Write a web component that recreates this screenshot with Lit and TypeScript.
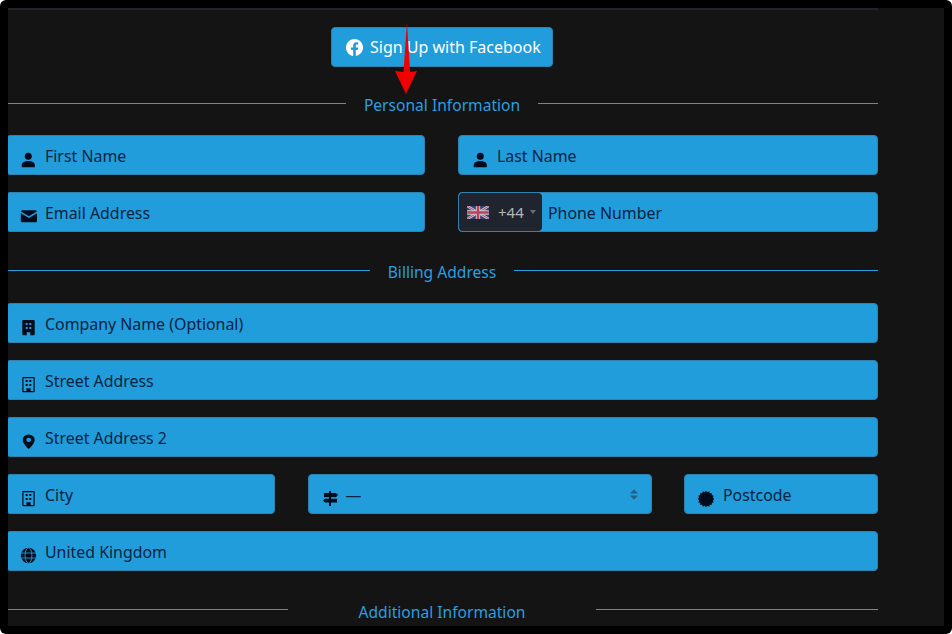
import { LitElement, html, css, svg } from "lit";
import { customElement } from "lit/decorators.js";

const burst = (() => {
  const pts: string[] = [];
  const n = 16;
  for (let i = 0; i < n * 2; i++) {
    const r = i % 2 ? 7 : 8.3;
    const a = (Math.PI * i) / n;
    pts.push(`${(7 + r * Math.cos(a)).toFixed(2)},${(8 + r * Math.sin(a)).toFixed(2)}`);
  }
  return pts.join(" ");
})();

const icons: Record<string, unknown> = {
  person: svg`<circle cx="7.3" cy="4.2" r="3.5"/><path d="M.7 14.7v-1.3c0-3 2.5-4.500 6.600-4.500s6.600 1.500 6.600 4.500v1.300a.6.6 0 0 1-.6.6H1.300a.6.6 0 0 1-.6-.6Z"/>`,
  envelope: svg`<path d="M1.500 1.200h12.800a1.500 1.500 0 0 1 1.500 1.300L7.900 7.300 0 2.500a1.500 1.500 0 0 1 1.500-1.300ZM-.2 4.200v7.500a1.500 1.500 0 0 0 1.500 1.500h13.200a1.500 1.500 0 0 0 1.500-1.500V4.200L7.900 9.100-.2 4.200Z"/>`,
  buildingFill: svg`<path fill-rule="evenodd" d="M2.300 0h10.400a1 1 0 0 1 1 1v13.200a1 1 0 0 1-1 1H9.300v-3H5.700v3H2.300a1 1 0 0 1-1-1V1a1 1 0 0 1 1-1ZM4.700 3v2h2V3h-2Zm3.600 0v2h2V3h-2ZM4.700 7v2h2V7h-2Zm3.600 0v2h2V7h-2Z"/>`,
  building: svg`<path fill-rule="evenodd" d="M2.300 0h10.400a1 1 0 0 1 1 1v13.200a1 1 0 0 1-1 1H2.300a1 1 0 0 1-1-1V1a1 1 0 0 1 1-1Zm.2 1.200v12.800h2.900v-2.800h4.200v2.800h2.900V1.200h-10ZM4.700 3h2v2h-2V3Zm3.600 0h2v2h-2V3ZM4.700 7h2v2h-2V7Zm3.600 0h2v2h-2V7Z"/>`,
  geo: svg`<path transform="translate(-.3 .5) scale(1 .9)" d="M8 16s6-5.686 6-10A6 6 0 0 0 2 6c0 4.314 6 10 6 10zm0-7.600a2.400 2.400 0 1 1 0-4.800 2.400 2.400 0 0 1 0 4.800z"/>`,
  signpost: svg`<path d="M6 0h2v2h5l2 2-2 2.200H8v1.300h6V11.500H8V15H6v-3.500H2L0 9.500l2-2h4V6.200H1V2h5V0Z"/><path d="M0 6.400h6v1.100H0zM8 6.400h8v1.100H8z" fill="#219ddc"/>`,
  patch: svg`<polygon points="${burst}"/>`,
  globe: svg`<circle cx="7.500" cy="7.500" r="7.700"/><g fill="none" stroke="#219ddc" stroke-width=".9"><ellipse cx="7.500" cy="7.500" rx="3.400" ry="7.700"/><path d="M0 5h15M0 10h15"/></g>`,
};

const icon = (name: string) =>
  html`<svg class="icon" viewBox="0 0 16 16" fill="currentColor" overflow="visible" aria-hidden="true">${icons[name]}</svg>`;

@customElement("app-field")
class AppField extends LitElement {
  static properties = { icon: {}, label: {} };
  icon = "person";
  label = "";
  static styles = css`
    :host { display: block; min-width: 0; }
    .field {
      display: flex; align-items: center; box-sizing: border-box; height: 39.5px;
      background: #219ddc; border: 1px solid #2f82ad; border-radius: 4px;
      padding-left: 14px; color: #08233f;
      font: 15.9px/24px "Noto Sans", "Open Sans", sans-serif;
    }
    .icon { width: 16px; height: 16px; flex: none; color: #000c1c; margin-top: 10px; }
    .text { margin-left: 8px; white-space: nowrap; margin-top: 1px; }
  `;
  render() {
    return html`<div class="field">${icon(this.icon)}<span class="text">${this.label}</span></div>`;
  }
}

@customElement("app-root")
export class AppRoot extends LitElement {
  static styles = css`
    :host { display: block; height: 634px; background: #fff; }
    .frame {
      box-sizing: border-box; height: 634px; padding: 8px; background: #000; border-radius: 6px;
    }
    .panel {
      position: relative; height: 618px; background: #141414; overflow: hidden;
      font: 16px/24px "Noto Sans", "Open Sans", sans-serif;
    }
    .content {
      box-sizing: border-box; width: 872px; margin-left: -2px; height: 618px;
      border-top: 2px solid #22222c; padding-top: 17px;
      display: flex; flex-direction: column; align-items: stretch;
    }
    .fb {
      align-self: center; display: flex; align-items: center; gap: 6px; box-sizing: border-box;
      height: 40px; width: 222px; padding-left: 14px; background: #219ddc; border: 1px solid #2f82ad;
      border-radius: 4px; color: #fff; font-size: 16px; white-space: nowrap;
    }
    .fb svg { width: 17px; height: 17px; flex: none; }
    .fb span { margin-left: 1px; }
    .heading {
      display: flex; align-items: center; color: #2a9fe0; height: 24px; white-space: nowrap;
      font-size: 15.6px;
    }
    .heading i { flex: 1; height: 1px; background: #2a9fe0; margin-bottom: 3px; }
    .h1 { margin: 26px 0 18.25px; gap: 18px; }
    .h2 { margin: 28.25px 0 19.25px; gap: 18px; }
    .h3 { margin: 28.5px 0 0; gap: 71px; }
    .h3 span { position: relative; top: 1px; }
    .rows { display: flex; flex-direction: column; gap: 17.5px; }
    .two { display: grid; grid-template-columns: 419px 420px; column-gap: 33px; }
    .three { display: grid; grid-template-columns: 269px 344px 194px; column-gap: 32.5px; }
    .field {
      display: flex; align-items: center; box-sizing: border-box; height: 39.5px; position: relative;
      background: #219ddc; border: 1px solid #2f82ad; border-radius: 4px; color: #08233f;
      font-size: 15.9px;
    }
    .select { padding-left: 14px; }
    .select svg.icon { width: 16px; height: 16px; color: #000c1c; margin-top: 10px; flex: none; }
    .select .text { margin-left: 7px; margin-top: 1px; }
    .updown { margin-left: auto; margin-right: 13px; width: 8px; height: 11px; color: #2a5f82; flex: none; }
    .phone { padding: 0; }
    .dial {
      display: flex; align-items: center; box-sizing: border-box; width: 83px; height: 37.5px;
      background: #20242e; border-radius: 4px; padding-left: 8px; color: #b4b4b4; flex: none;
    }
    .dial svg.flag { width: 22px; height: 13px; flex: none; opacity: .85; }
    .dial span { margin-left: 9px; font-size: 15px; }
    .dial em { margin-left: 6px; width: 0; height: 0; border: 3px solid transparent; border-top: 4px solid #6a6e76; border-bottom: 0; }
    .phone .text { margin-left: 6px; margin-top: 1px; }
    .arrow { position: absolute; left: 380px; top: 10px; width: 40px; height: 80px; pointer-events: none; }
  `;

  render() {
    return html`
      <div class="frame">
        <div class="panel">
          <div class="content">
            <div class="fb">
              <svg viewBox="0 0 16 16" fill="currentColor"><path d="M16 8.049c0-4.446-3.582-8.050-8-8.050C3.580 0-.002 3.603-.002 8.050c0 4.017 2.926 7.347 6.750 7.951v-5.625h-2.030V8.050H6.750V6.275c0-2.017 1.195-3.131 3.022-3.131.876 0 1.791.157 1.791.157v1.980h-1.009c-.993 0-1.303.621-1.303 1.258v1.510h2.218l-.354 2.326H9.250V16c3.824-.604 6.750-3.934 6.750-7.951z"/></svg>
              <span>Sign Up with Facebook</span>
            </div>
            <div class="heading h1"><i></i><span>Personal Information</span><i></i></div>
            <div class="rows">
              <div class="two">
                <app-field icon="person" label="First Name"></app-field>
                <app-field icon="person" label="Last Name"></app-field>
              </div>
              <div class="two">
                <app-field icon="envelope" label="Email Address"></app-field>
                <div class="field phone">
                  <div class="dial">
                    <svg class="flag" viewBox="0 0 60 36">
                      <rect width="60" height="36" fill="#3a4a88"/>
                      <path d="M0 0l60 36M60 0L0 36" stroke="#ece8f0" stroke-width="7"/>
                      <path d="M0 0l60 36M60 0L0 36" stroke="#d84860" stroke-width="2.5"/>
                      <path d="M30 0v36M0 18h60" stroke="#ece8f0" stroke-width="12"/>
                      <path d="M30 0v36M0 18h60" stroke="#d84860" stroke-width="7"/>
                    </svg>
                    <span>+44</span><em></em>
                  </div>
                  <span class="text">Phone Number</span>
                </div>
              </div>
            </div>
            <div class="heading h2"><i></i><span>Billing Address</span><i></i></div>
            <div class="rows">
              <app-field icon="buildingFill" label="Company Name (Optional)"></app-field>
              <app-field icon="building" label="Street Address"></app-field>
              <app-field icon="geo" label="Street Address 2"></app-field>
              <div class="three">
                <app-field icon="building" label="City"></app-field>
                <div class="field select">
                  ${icon("signpost")}
                  <span class="text">—</span>
                  <svg class="updown" viewBox="0 0 9 12" fill="currentColor"><path d="M4.5 0L9 5H0zM4.5 12L0 7h9z"/></svg>
                </div>
                <app-field icon="patch" label="Postcode"></app-field>
              </div>
              <app-field icon="globe" label="United Kingdom"></app-field>
            </div>
            <div class="heading h3"><i></i><span>Additional Information</span><i></i></div>
          </div>
          <svg class="arrow" viewBox="0 0 40 80" fill="#f00000"><path d="M19 4L22 54 L29 53 L18 76 L7 53 L15.5 54Z"/></svg>
        </div>
      </div>
    `;
  }
}
